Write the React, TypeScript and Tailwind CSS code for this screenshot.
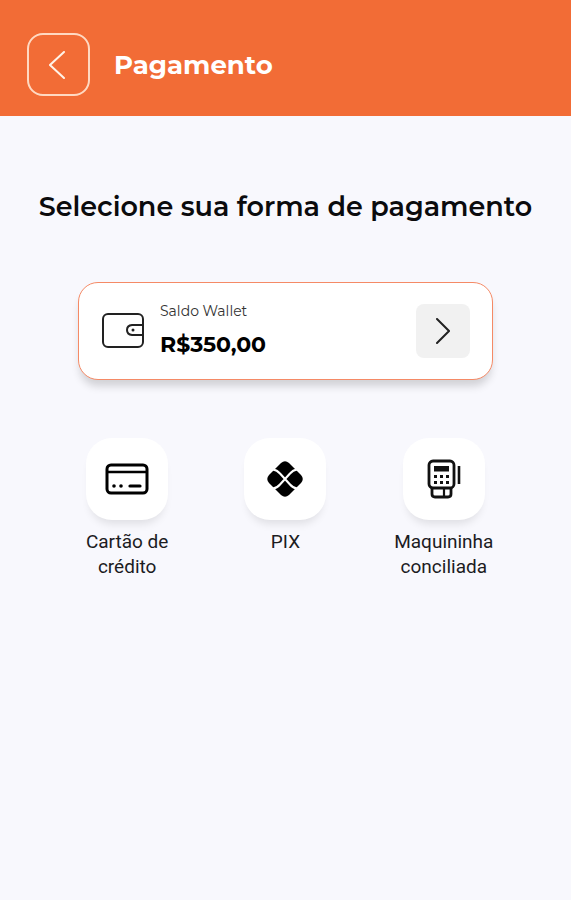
import { FC, ReactNode } from 'react';

interface MethodProps {
    label: string;
    children: ReactNode;
}

const PaymentMethod: FC<MethodProps> = ({ label, children }) => (
    <li className="flex justify-center">
        <button type="button" className="flex w-[120px] flex-col items-center">
            <span className="flex size-[82px] items-center justify-center rounded-[26px] bg-white shadow-[0_8px_8px_-4px_rgba(0,0,0,0.1)]">
                {children}
            </span>
            <span className="mt-[9px] font-[Roboto,sans-serif] text-[19px] leading-[25px] text-[#1c1c1f]">{label}</span>
        </button>
    </li>
);

const CardIcon = () => (
    <svg width="44" height="32" viewBox="0 0 44 32" fill="none" stroke="#000" strokeWidth="3" aria-hidden="true">
        <rect x="2" y="2" width="40" height="28" rx="4" />
        <path d="M2 9h40" strokeWidth="2.4" />
        <path d="M25 23h10" strokeWidth="3.2" strokeLinecap="round" />
        <circle cx="9" cy="23" r="1.8" fill="#000" stroke="none" />
        <circle cx="16" cy="23" r="1.8" fill="#000" stroke="none" />
    </svg>
);

const PixIcon = () => (
    <svg width="38" height="38" viewBox="0 0 38 38" aria-hidden="true">
        <path
            d="M15 3Q19 -0.5 23 3L35 15Q38.5 19 35 23L23 35Q19 38.5 15 35L3 23Q-0.5 19 3 15Z"
            fill="#000"
        />
        <path
            d="M7 9.5Q11 10 14 13.5L24 24.5Q27 28 31 28.5M31 9.5Q27 10 24 13.5L14 24.5Q11 28 7 28.5"
            fill="none"
            stroke="#fff"
            strokeWidth="2.1"
        />
    </svg>
);

const TerminalIcon = () => (
    <svg width="34" height="40" viewBox="0 0 34 40" fill="none" stroke="#111" strokeWidth="2.8" aria-hidden="true">
        <rect x="2" y="2" width="25" height="27" rx="4" />
        <path d="M5 29v6q0 3 3 3h13q3 0 3-3v-6" />
        <path d="M17 29v9" strokeWidth="2.2" />
        <path d="M32 7v18" strokeWidth="2.6" />
        <rect x="7" y="7" width="15" height="5.5" fill="#111" stroke="none" />
        <path d="M7 17.5h3M13 17.5h3M19 17.5h3M7 23.5h3M13 23.5h3M19 23.5h3" strokeWidth="3" />
    </svg>
);

const WalletIcon = () => (
    <svg width="42" height="36" viewBox="0 0 42 36" fill="none" stroke="#222" strokeWidth="2" aria-hidden="true">
        <rect x="1" y="1" width="40" height="33" rx="5" />
        <path d="M41 12H30Q25 12.5 25 17T30 22H41" />
        <circle cx="31" cy="17" r="1.5" fill="#222" stroke="none" />
    </svg>
);

const App = () => {
    return (
        <div className="min-h-screen bg-[#f8f8fd] font-[Montserrat,Inter,sans-serif]">
            <header className="flex items-center gap-6 bg-[#f26c36] px-[27px] pt-[33px] pb-5 text-white">
                <button type="button" aria-label="Voltar" className="flex size-[63px] items-center justify-center rounded-2xl border-2 border-[#ffd9c2]">
                    <svg width="16" height="28" viewBox="0 0 16 28" fill="none" stroke="#fff3e8" strokeWidth="2" strokeLinecap="round" className="mr-1" aria-hidden="true">
                        <path d="M15 1L1 14L15 27" />
                    </svg>
                </button>
                <span className="text-[26px] leading-8 font-bold">Pagamento</span>
            </header>
            <main className="pt-[75px]">
                <h1 className="text-center text-[27px] leading-8 font-semibold whitespace-nowrap text-[#0b0b0d]">Selecione sua forma de pagamento</h1>
                <div className="px-[78px] pt-[59px]">
                    <button type="button" className="flex w-full items-center rounded-[20px] border border-[#f58a66] bg-white py-5 pr-[22px] pl-[23px] text-left shadow-[0_8px_9px_-2px_rgba(0,0,0,0.16)]">
                        <WalletIcon />
                        <span className="ml-4 flex flex-1 flex-col">
                            <span className="text-[14px] leading-4 text-[#333]">Saldo Wallet</span>
                            <span className="mt-3 text-[22px] leading-7 font-bold text-black">R$350,00</span>
                        </span>
                        <span className="flex size-[54px] items-center justify-center rounded-lg bg-[#f1f1f1]">
                            <svg width="14" height="26" viewBox="0 0 14 26" fill="none" stroke="#222" strokeWidth="2" strokeLinecap="round" aria-hidden="true">
                                <path d="M1 1L13 13L1 25" />
                            </svg>
                        </span>
                    </button>
                </div>
                <ul className="grid grid-cols-3 px-12 pt-[58px]">
                    <PaymentMethod label="Cartão de crédito"><CardIcon /></PaymentMethod>
                    <PaymentMethod label="PIX"><PixIcon /></PaymentMethod>
                    <PaymentMethod label="Maquininha conciliada"><TerminalIcon /></PaymentMethod>
                </ul>
            </main>
        </div>
    )
}

export default App
